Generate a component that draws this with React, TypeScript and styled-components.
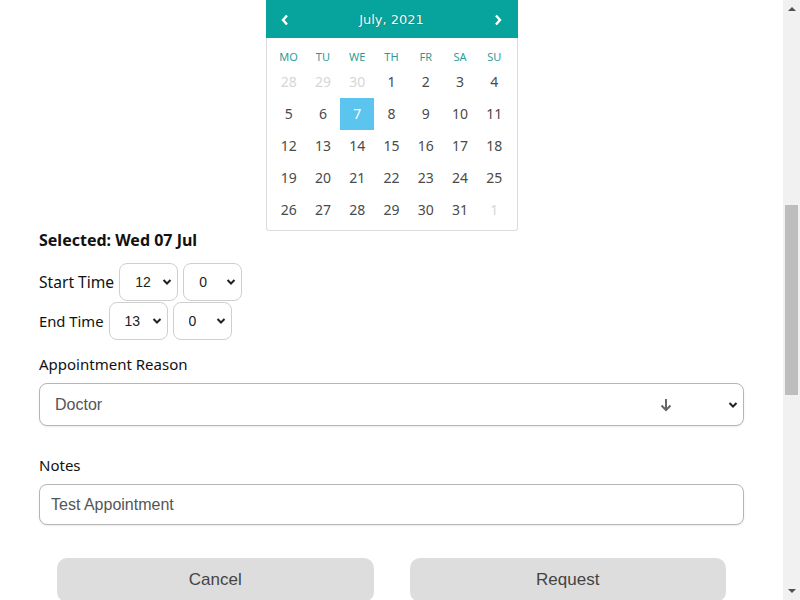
import React, { useLayoutEffect } from "react";
import styled, { createGlobalStyle } from "styled-components";

const GlobalStyle = createGlobalStyle`
  html, body { margin: 0; padding: 0; background: #fff; }
  body { font-family: "Noto Sans", "Open Sans", sans-serif; color: #111; }
`;

const Page = styled.div`
  padding: 588px 56px 560px 39px;
  display: flex;
  flex-direction: column;
`;

// the browser's own scrollbar, drawn since the headless window hides it
const ScrollBar = styled.div`
  position: fixed;
  top: 0;
  right: 0;
  width: 17px;
  height: 100vh;
  background: #f1f1f1;
  display: flex;
  flex-direction: column;
`;

const ScrollArrow = styled.div`
  height: 17px;
  display: flex;
  align-items: center;
  justify-content: center;
`;

const ScrollTrack = styled.div`
  flex: 1;
  padding: 188px 2px 0;
`;

const ScrollThumb = styled.div`
  height: 190px;
  background: #bdbdbd;
`;

const Calendar = styled.div`
  align-self: center;
  width: 252px;
`;

const CalHeader = styled.div`
  height: 44px;
  background: #06a49c;
  display: flex;
  align-items: flex-end;
  justify-content: space-between;
  padding: 0 14px 6px;
  box-sizing: border-box;
  color: #fff;
`;

const CalTitle = styled.div`
  font-family: "DejaVu Sans", Verdana, sans-serif;
  font-size: 13px;
  line-height: 24px;
  text-shadow: 0 0 1px rgba(0, 0, 0, 0.5);
`;

const NavBtn = styled.span`
  display: flex;
  align-items: center;
  height: 24px;
`;

const CalBody = styled.div`
  border: 1px solid #dcdcdc;
  border-top: none;
  border-radius: 0 0 3px 3px;
  padding: 10px 5px 4px;
  display: grid;
  grid-template-columns: repeat(7, 1fr);
`;

const DayName = styled.div`
  height: 18px;
  line-height: 18px;
  text-align: center;
  font-size: 11px;
  color: #2a9d9a;
`;

const Day = styled.div<{ $muted?: boolean; $selected?: boolean }>`
  height: 32px;
  line-height: 32px;
  text-align: center;
  font-size: 14px;
  color: ${(p) => (p.$selected ? "#fff" : p.$muted ? "#d6d6d6" : "#4a4a4a")};
  background: ${(p) => (p.$selected ? "#5bc5ef" : "transparent")};
`;

const Selected = styled.div`
  font-weight: bold;
  font-size: 16px;
  line-height: 18px;
`;

const TimeRow = styled.div<{ $first?: boolean }>`
  display: flex;
  align-items: center;
  gap: 5px;
  margin-top: ${(p) => (p.$first ? "14px" : "1px")};
`;

const Label = styled.label`
  font-size: 15px;
  line-height: 20px;
`;

const TimeLabel = styled(Label)<{ $size: number }>`
  font-size: ${(p) => p.$size}px;
`;

const FieldLabel = styled(Label)<{ $gap: number }>`
  display: block;
  margin-top: ${(p) => p.$gap}px;
  margin-bottom: 9px;
`;

const SelectWrap = styled.div<{ $w?: number }>`
  position: relative;
  width: ${(p) => (p.$w ? `${p.$w}px` : "100%")};
`;

const NativeSelect = styled.select<{ $h: number; $size: number }>`
  appearance: none;
  width: 100%;
  height: ${(p) => p.$h}px;
  box-sizing: border-box;
  border: 1px solid #cfcfcf;
  border-radius: 8px;
  background: #fff;
  font-family: "Liberation Sans", Arial, sans-serif;
  font-size: ${(p) => p.$size}px;
  color: ${(p) => (p.$size > 15 ? "#555" : "#222")};
  padding: 0 0 0 15px;
`;

const WideSelect = styled(NativeSelect)`
  border-color: #b5b5b5;
  box-shadow: 0 1px 2px rgba(0, 0, 0, 0.08);
`;

const Chevron = styled.svg`
  position: absolute;
  right: 6px;
  top: 50%;
  margin-top: -4px;
  pointer-events: none;
`;

const DownArrow = styled.svg`
  position: absolute;
  right: 72px;
  top: 50%;
  margin-top: -7px;
  pointer-events: none;
`;

const TextInput = styled.input`
  width: 100%;
  height: 41px;
  box-sizing: border-box;
  border: 1px solid #b5b5b5;
  border-radius: 8px;
  padding: 0 11px;
  font-family: "Liberation Sans", Arial, sans-serif;
  font-size: 16px;
  color: #555;
  box-shadow: 0 1px 2px rgba(0, 0, 0, 0.08);
`;

const Buttons = styled.div`
  display: grid;
  grid-template-columns: 1fr 1fr;
  gap: 36px;
  padding: 0 18px;
  margin-top: 33px;
`;

const Button = styled.button`
  height: 44px;
  border: none;
  border-radius: 10px;
  background: #dddddd;
  font-family: "Liberation Sans", Arial, sans-serif;
  font-size: 17px;
  color: #444;
  padding-bottom: 2px;
`;

const ChevronIcon = () => (
  <Chevron width="10" height="8" viewBox="0 0 10 8">
    <path d="M1.5 2 L5 5.5 L8.5 2" fill="none" stroke="#222" strokeWidth="2" />
  </Chevron>
);

const days: { d: number; muted?: boolean }[] = [
  { d: 28, muted: true }, { d: 29, muted: true }, { d: 30, muted: true },
  ...Array.from({ length: 31 }, (_, i) => ({ d: i + 1 })),
  { d: 1, muted: true },
];

const TimeSelect = ({ value }: { value: string }) => (
  <SelectWrap $w={59}>
    <NativeSelect $h={38} $size={14} defaultValue={value}>
      <option>{value}</option>
    </NativeSelect>
    <ChevronIcon />
  </SelectWrap>
);

export default function App() {
  useLayoutEffect(() => {
    window.scrollTo(0, 594);
  }, []);

  return (
    <>
      <GlobalStyle />
      <Page>
        <Calendar>
          <CalHeader>
            <NavBtn>
              <svg width="10" height="12" viewBox="0 0 10 12">
                <path d="M7 1.5 L3 6 L7 10.5" fill="none" stroke="#fff" strokeWidth="2.4" />
              </svg>
            </NavBtn>
            <CalTitle>July, 2021</CalTitle>
            <NavBtn>
              <svg width="10" height="12" viewBox="0 0 10 12">
                <path d="M3 1.5 L7 6 L3 10.5" fill="none" stroke="#fff" strokeWidth="2.4" />
              </svg>
            </NavBtn>
          </CalHeader>
          <CalBody>
            {["MO", "TU", "WE", "TH", "FR", "SA", "SU"].map((n) => (
              <DayName key={n}>{n}</DayName>
            ))}
            {days.map((x, i) => (
              <Day key={i} $muted={x.muted} $selected={!x.muted && x.d === 7}>
                {x.d}
              </Day>
            ))}
          </CalBody>
        </Calendar>

        <Selected>Selected: Wed 07 Jul</Selected>

        <TimeRow $first>
          <TimeLabel $size={15.6}>Start Time</TimeLabel>
          <TimeSelect value="12" />
          <TimeSelect value="0" />
        </TimeRow>
        <TimeRow>
          <TimeLabel $size={14.8}>End Time</TimeLabel>
          <TimeSelect value="13" />
          <TimeSelect value="0" />
        </TimeRow>

        <FieldLabel $gap={14}>Appointment Reason</FieldLabel>
        <SelectWrap>
          <WideSelect $h={43} $size={16} defaultValue="Doctor">
            <option>Doctor</option>
          </WideSelect>
          <DownArrow width="12" height="14" viewBox="0 0 12 14">
            <path d="M6 1 V12 M1.5 7.5 L6 12 L10.5 7.5" fill="none" stroke="#666" strokeWidth="2" />
          </DownArrow>
          <ChevronIcon />
        </SelectWrap>

        <FieldLabel $gap={29}>Notes</FieldLabel>
        <TextInput defaultValue="Test Appointment" />

        <Buttons>
          <Button>Cancel</Button>
          <Button>Request</Button>
        </Buttons>
      </Page>
      <ScrollBar>
        <ScrollArrow>
          <svg width="8" height="5" viewBox="0 0 8 5">
            <path d="M0 5 L4 1 L8 5 Z" fill="#505050" />
          </svg>
        </ScrollArrow>
        <ScrollTrack>
          <ScrollThumb />
        </ScrollTrack>
        <ScrollArrow>
          <svg width="8" height="5" viewBox="0 0 8 5">
            <path d="M0 0 L4 4 L8 0 Z" fill="#505050" />
          </svg>
        </ScrollArrow>
      </ScrollBar>
    </>
  );
}
